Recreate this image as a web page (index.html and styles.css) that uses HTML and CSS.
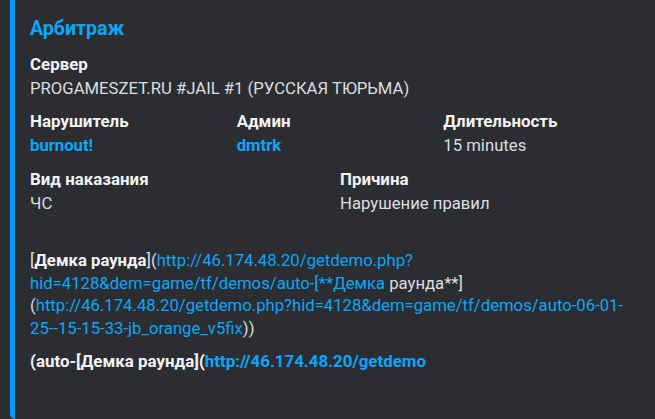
FILE: index.html
```html
<!DOCTYPE html>
<html lang="ru">
<head>
<meta charset="utf-8">
<title>Арбитраж</title>
<link rel="stylesheet" href="styles.css">
</head>
<body>
<article class="embed">
  <div class="title">Арбитраж</div>
  <div class="fields">
    <div class="field full">
      <div class="name">Сервер</div>
      <div class="value">PROGAMESZET.RU #JAIL #1 (РУССКАЯ ТЮРЬМА)</div>
    </div>
    <div class="field c1">
      <div class="name">Нарушитель</div>
      <div class="value"><a class="link strong">burnout!</a></div>
    </div>
    <div class="field c2">
      <div class="name">Админ</div>
      <div class="value"><a class="link strong">dmtrk</a></div>
    </div>
    <div class="field c3">
      <div class="name">Длительность</div>
      <div class="value">15 minutes</div>
    </div>
    <div class="field h1">
      <div class="name">Вид наказания</div>
      <div class="value">ЧС</div>
    </div>
    <div class="field h2">
      <div class="name">Причина</div>
      <div class="value">Нарушение правил</div>
    </div>
    <div class="field full">
      <div class="name blank"></div>
      <div class="value">
        <span class="ln">[<b>Демка раунда</b>](<a class="link">http://46.174.48.20/getdemo.php?</a></span>
        <span class="ln"><a class="link">hid=4128&amp;dem=game/tf/demos/auto-[**Демка</a> раунда**]</span>
        <span class="ln">(<a class="link">http://46.174.48.20/getdemo.php?hid=4128&amp;dem=game/tf/demos/auto-06-01-</a></span>
        <span class="ln"><a class="link">25--15-15-33-jb_orange_v5fix</a>))</span>
      </div>
    </div>
    <div class="field full">
      <div class="name">(auto-[Демка раунда](<a class="link">http://46.174.48.20/getdemo</a></div>
      <div class="value blank"></div>
    </div>
  </div>
</article>
</body>
</html>
```
FILE: styles.css
```css
html, body {
  margin: 0;
  padding: 0;
  overflow: hidden;
  background: #2b2d31;
}
body {
  width: 655px;
  height: 419px;
  font-family: Roboto, "Noto Sans", sans-serif;
}
.embed {
  box-sizing: border-box;
  margin-left: 10px;
  width: 650px;
  padding: 15px 20px 21px 15px;
  border-left: 5px solid #0a98ff;
  border-radius: 0 0 0 5px;
  background: #2b2d31;
}
.title {
  color: #08a7fa;
  font-weight: 700;
  font-size: 19.6px;
  line-height: 27.5px;
}
.fields {
  margin-top: 10px;
  display: grid;
  grid-template-columns: repeat(12, 1fr);
  gap: 10px;
}
.full { grid-column: 1 / 13; }
.c1 { grid-column: 1 / 5; }
.c2 { grid-column: 5 / 9; }
.c3 { grid-column: 9 / 13; }
.h1 { grid-column: 1 / 7; }
.h2 { grid-column: 7 / 13; }
.name {
  color: #f2f3f5;
  font-weight: 700;
  font-size: 16.9px;
  line-height: 22.5px;
  margin-bottom: 2.5px;
  white-space: nowrap;
}
.value {
  color: #dbdee1;
  font-size: 16.7px;
  line-height: 22.5px;
}
.blank {
  height: 22.5px;
}
.value b {
  color: #f2f3f5;
  font-weight: 700;
}
.ln {
  display: block;
  white-space: nowrap;
}
.link {
  color: #08a7fa;
  text-decoration: none;
}
.strong {
  font-weight: 700;
}
```
